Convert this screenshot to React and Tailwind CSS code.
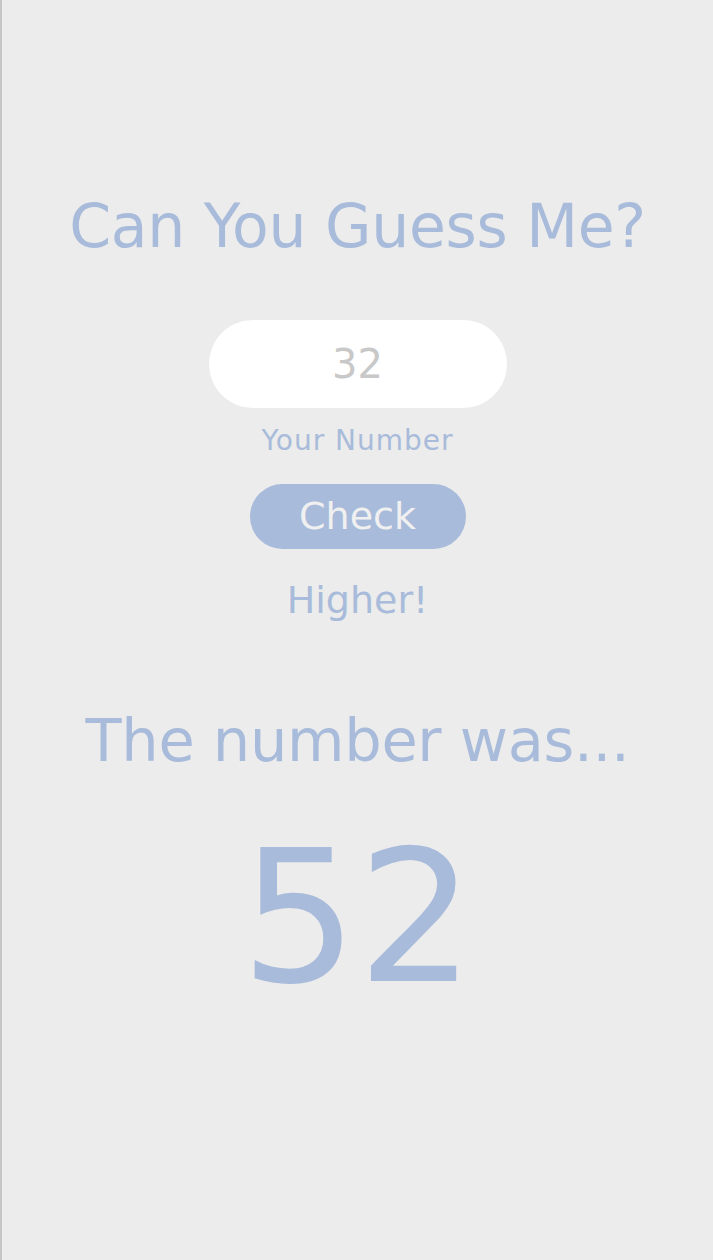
export default function App() {
  const f = { fontFamily: '"DejaVu Sans", Verdana, sans-serif' };
  return (
    <div className="min-h-[1260px] w-full bg-[#ececec] border-l-2 border-[#c6c6c6] flex flex-col items-center" style={f}>
      <h1 className="mt-[188px] text-[60px] leading-[76px] tracking-[-0.3px] text-[#a8bbda] font-normal">Can You Guess Me?</h1>
      <div className="mt-[56px] w-[298px] h-[88px] rounded-full bg-white flex items-center justify-center text-[40px] text-[#c8c8c8]">32</div>
      <div className="mt-[16px] text-[28px] leading-[34px] tracking-[1px] text-[#a8bbda]">Your Number</div>
      <div className="mt-[26px] w-[216px] h-[65px] rounded-full bg-[#a8bbda] flex items-center justify-center text-[38px] text-[#f0f0f0]">Check</div>
      <div className="mt-[27px] text-[38px] leading-[48px] text-[#a8bbda]">Higher!</div>
      <div className="mt-[81px] text-[59px] leading-[72px] tracking-[-0.3px] text-[#a8bbda]">The number was...</div>
      <div className="mt-[40px] text-[184px] leading-[200px] text-[#a8bbda]">52</div>
    </div>
  );
}
